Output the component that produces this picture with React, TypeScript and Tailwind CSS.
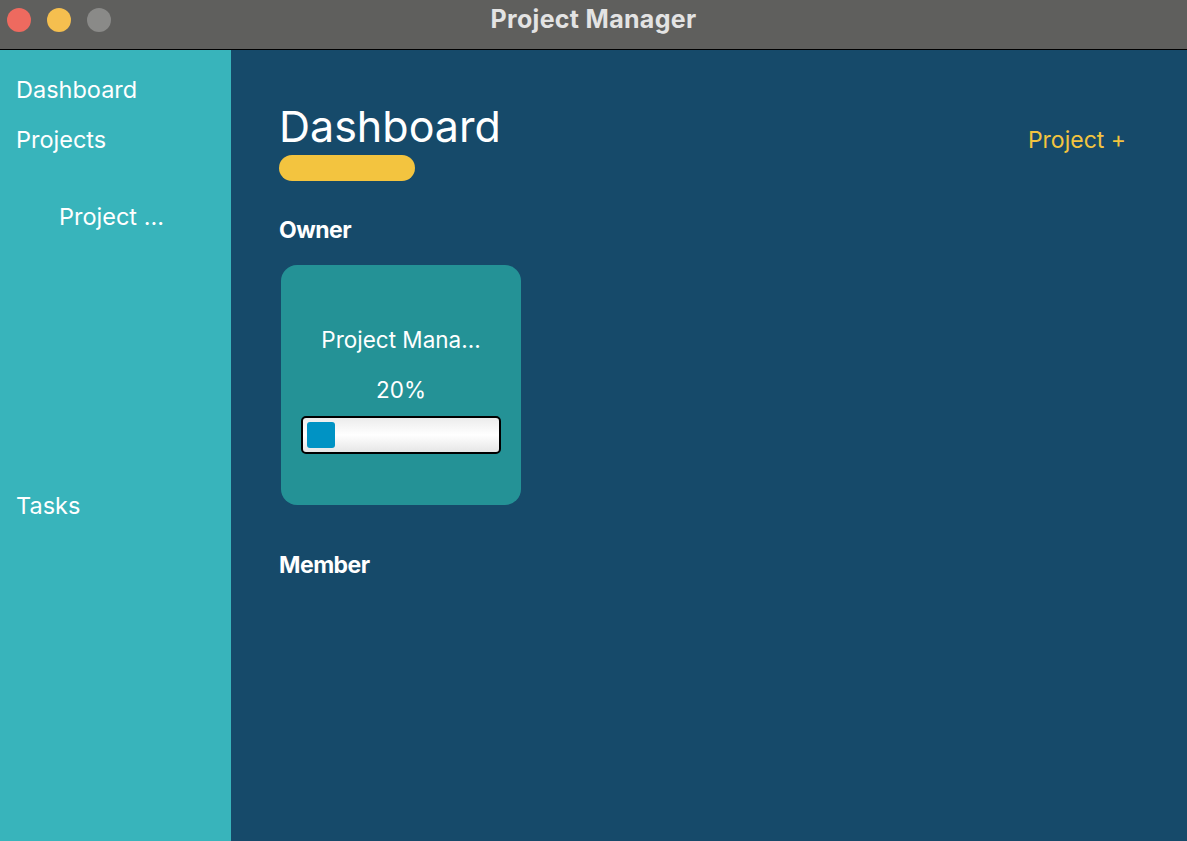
export default function App() {
  return (
    <div className="flex h-[841px] w-[1187px] flex-col overflow-hidden bg-[#164a6a] font-['Inter',sans-serif]">
      {/* title bar */}
      <div className="relative flex h-[50px] shrink-0 items-center justify-center border-b border-black bg-[#5f5f5d]">
        <div className="absolute left-[7px] top-[8px] flex gap-[16px]">
          <span className="h-[24px] w-[24px] rounded-full bg-[#ee6a5f]" />
          <span className="h-[24px] w-[24px] rounded-full bg-[#f5bf4f]" />
          <span className="h-[24px] w-[24px] rounded-full bg-[#8a8a88]" />
        </div>
        <span className="mt-[-10px] text-[25px] font-bold tracking-[0.3px] text-[#e3e3e3]">Project Manager</span>
      </div>

      <div className="flex flex-1">
        {/* sidebar */}
        <div className="flex w-[231px] shrink-0 flex-col bg-[#38b4bb] pt-[25px] text-[23.5px] text-white">
          <div className="pl-[16px] leading-[30px]">Dashboard</div>
          <div className="mt-[20px] pl-[16px] leading-[30px]">Projects</div>
          <div className="mt-[47px] pl-[59px] leading-[30px]">Project ...</div>
          <div className="mt-[259px] pl-[16px] leading-[30px]">Tasks</div>
        </div>

        {/* main */}
        <div className="flex flex-1 flex-col">
          <div className="flex flex-col pl-[48px] pr-[61px] pt-[48px]">
            <div className="flex items-start justify-between">
              <div className="flex flex-col">
                <h1 className="text-[43px] leading-[56px] text-white">Dashboard</h1>
                <div className="mt-[1px] h-[26px] w-[136px] rounded-full bg-[#f3c43f]" />
              </div>
              <span className="mt-[25px] text-[23px] text-[#f3c43f]">Project +</span>
            </div>
            <h2 className="mt-[34px] text-[23px] font-bold leading-[30px] tracking-[-0.5px] text-white">Owner</h2>
            <div className="ml-[2px] mt-[20px] flex h-[240px] w-[240px] flex-col items-center rounded-[16px] bg-[#249296] pt-[60px]">
              <span className="text-[22.5px] leading-[30px] text-white">Project Mana...</span>
              <span className="mt-[20px] text-[22.5px] leading-[30px] text-white">20%</span>
              <div className="mt-[11px] flex h-[38px] w-[200px] items-center rounded-[5px] border-2 border-black bg-gradient-to-b from-[#ececec] via-white to-[#e6e6e6] px-[4px]">
                <div className="h-[26px] w-[28px] rounded-[3px] bg-[#0093c4]" />
              </div>
            </div>
            <h2 className="mt-[45px] text-[23px] font-bold leading-[30px] tracking-[-0.5px] text-white">Member</h2>
          </div>
        </div>
      </div>
    </div>
  );
}
